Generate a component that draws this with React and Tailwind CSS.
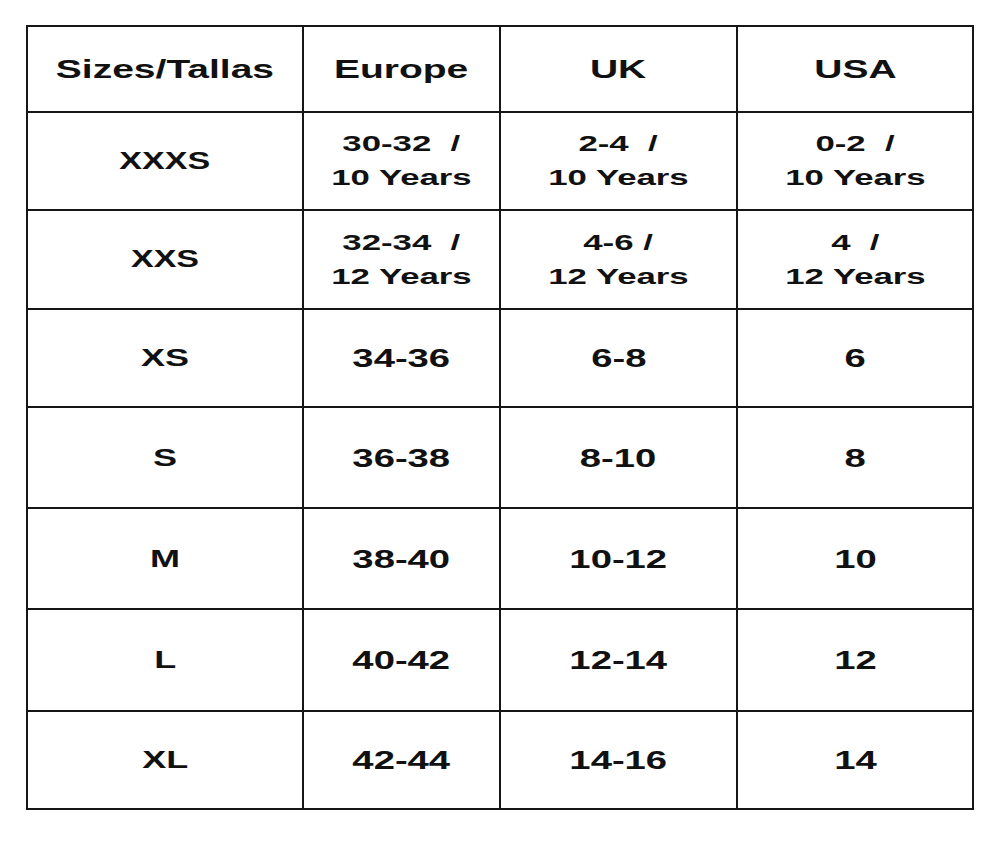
import React from "react";

// Tabla de tallas — filas con su altura medida
const ROWS = [
  { h: "h-[98px]", small: true, cells: ["XXXS", ["30-32  /", "10 Years"], ["2-4  /", "10 Years"], ["0-2  /", "10 Years"]] },
  { h: "h-[99px]", small: true, cells: ["XXS", ["32-34  /", "12 Years"], ["4-6 /", "12 Years"], ["4  /", "12 Years"]] },
  { h: "h-[98px]", cells: ["XS", "34-36", "6-8", "6"] },
  { h: "h-[101px]", cells: ["S", "36-38", "8-10", "8"] },
  { h: "h-[101px]", cells: ["M", "38-40", "10-12", "10"] },
  { h: "h-[102px]", cells: ["L", "40-42", "12-14", "12"] },
  { h: "h-[98px]", cells: ["XL", "42-44", "14-16", "14"] },
];

const HEADERS = ["Sizes/Tallas", "Europe", "UK", "USA"];

function Cell({ value, textClass }) {
  return (
    <div className="border-r-2 border-b-2 border-[#161616] flex items-center justify-center">
      {Array.isArray(value) ? (
        <div className="flex flex-col items-center text-[22px] leading-[34px]">
          {value.map((line, i) => (
            <span key={i} className="inline-block whitespace-pre scale-x-[1.58]">{line}</span>
          ))}
        </div>
      ) : (
        <span className={`inline-block whitespace-pre leading-none ${textClass}`}>{value}</span>
      )}
    </div>
  );
}

export default function App() {
  return (
    <div className="w-[1000px] h-[841px] bg-white pl-[26px] pt-[25px] font-['Liberation_Sans',Arial,sans-serif] font-bold text-[#111]">
      <div className="w-[948px] border-l-2 border-t-2 border-[#161616]">
        {/* Cabecera */}
        <div className="grid grid-cols-[276px_197px_237px_236px] h-[86px]">
          {HEADERS.map((h) => <Cell key={h} value={h} textClass="text-[25px] scale-x-[1.56]" />)}
        </div>
        {ROWS.map((row, r) => (
          <div key={r} className={`grid grid-cols-[276px_197px_237px_236px] ${row.h}`}>
            {row.cells.map((c, i) => (
              <Cell
                key={i}
                value={c}
                textClass={i === 0
                  ? row.small ? "text-[23px] scale-x-[1.48]" : "text-[24px] scale-x-[1.5]"
                  : "text-[26px] scale-x-[1.47]"}
              />
            ))}
          </div>
        ))}
      </div>
    </div>
  );
}
